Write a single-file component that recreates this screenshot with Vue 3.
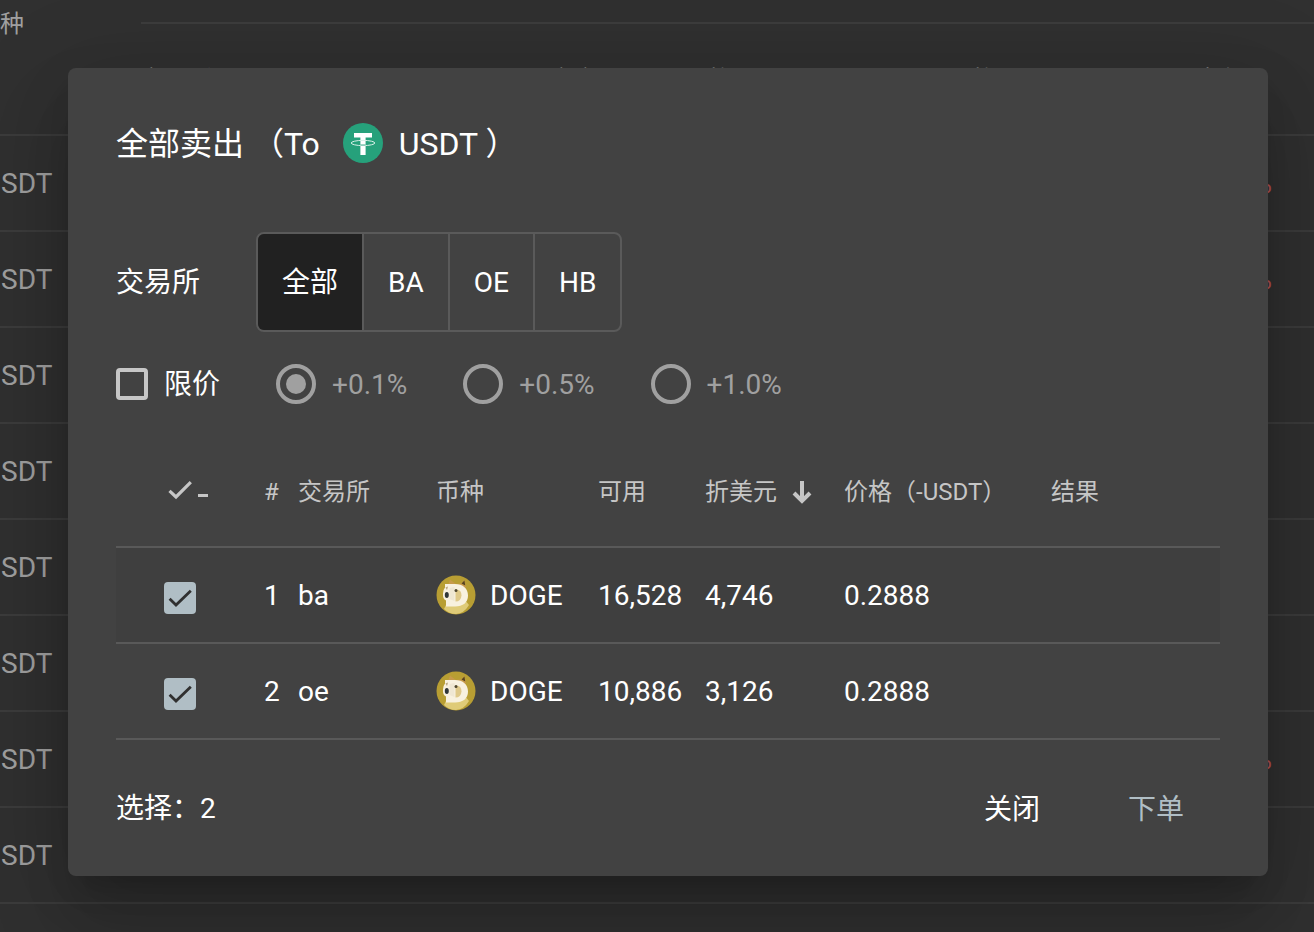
<script setup>
import { ref, computed } from 'vue'

const exchanges = ['全部', 'BA', 'OE', 'HB']
const exchange = ref('全部')
const limit = ref(false)
const offsets = ['+0.1%', '+0.5%', '+1.0%']
const offset = ref('+0.1%')
const orders = ref([
  { exchange: 'ba', coin: 'DOGE', available: '16,528', usd: '4,746', price: '0.2888', selected: true },
  { exchange: 'oe', coin: 'DOGE', available: '10,886', usd: '3,126', price: '0.2888', selected: true },
])
const selectedCount = computed(() => orders.value.filter((o) => o.selected).length)
const pageHeads = ['交易所', '价', '交交', '价格', '价格', '变化']
const pageRows = ['%', '%', '', '', '', '', '%', '']
</script>

<template>
  <div class="app">
    <main class="page">
      <div class="legend"><span>种</span><hr /></div>
      <div class="page-head">
        <span v-for="(h, i) in pageHeads" :key="i">{{ h }}</span>
      </div>
      <div v-for="(change, i) in pageRows" :key="i" class="page-row">
        <span>SDT</span><span class="loss">{{ change }}</span>
      </div>
    </main>

    <div class="overlay">
      <section class="dialog" role="dialog" aria-labelledby="dialog-title">
        <h2 id="dialog-title" class="title">
          <span class="text">全部卖出 （To</span>
          <svg class="coin tether" viewBox="0 0 40 40" aria-hidden="true">
            <circle cx="20" cy="20" r="20" fill="#26a17b" />
            <path d="M11 10H29V14.600H22.600V32H17.400V14.600H11Z" fill="#fff" />
            <ellipse cx="20" cy="20" rx="11.800" ry="2.600" fill="none" stroke="#d9f1e9" stroke-width="1" />
            <path d="M17.400 21.200H22.600V22.800H17.400Z" fill="#26a17b" opacity=".55" />
          </svg>
          <span class="text">USDT ）</span>
        </h2>

        <div class="exchange-row">
          <span id="exchange-label" class="text">交易所</span>
          <div class="toggle" role="group" aria-labelledby="exchange-label">
            <button
              v-for="e in exchanges"
              :key="e"
              type="button"
              :class="{ active: e === exchange }"
              :aria-pressed="e === exchange"
              @click="exchange = e"
            >{{ e }}</button>
          </div>
        </div>

        <div class="limit-row">
          <label class="option"><input v-model="limit" class="box" type="checkbox" /><span class="text">限价</span></label>
          <label v-for="o in offsets" :key="o" class="option" :class="{ disabled: !limit }">
            <input v-model="offset" class="radio" type="radio" name="offset" :value="o" :disabled="!limit" />
            <span class="text">{{ o }}</span>
          </label>
        </div>

        <table>
          <colgroup>
            <col class="c-select" /><col class="c-num" /><col class="c-exchange" /><col class="c-coin" />
            <col class="c-available" /><col class="c-usd" /><col class="c-price" /><col />
          </colgroup>
          <thead>
            <tr>
              <th class="select">
                <button type="button" class="select-all" aria-label="切换选择">
                  <svg width="48" height="32" viewBox="0 0 48 32" fill="none" stroke="currentColor" aria-hidden="true">
                    <path d="M5.500 14.800L12 21L26.800 6.200" stroke-width="3.200" />
                    <path d="M34 19.500H44" stroke-width="3" />
                  </svg>
                </button>
              </th>
              <th>#</th>
              <th>交易所</th>
              <th>币种</th>
              <th>可用</th>
              <th>
                <button type="button" class="sort">
                  折美元
                  <svg width="20" height="28" viewBox="0 0 20 28" fill="none" stroke="currentColor" stroke-width="4" aria-hidden="true">
                    <path d="M10 3V23M2 15L10 23L18 15" />
                  </svg>
                </button>
              </th>
              <th>价格（-USDT）</th>
              <th>结果</th>
            </tr>
          </thead>
          <tbody>
            <tr v-for="(o, i) in orders" :key="o.exchange" :class="{ hovered: i === 0 }">
              <td class="select">
                <label class="tick">
                  <input v-model="o.selected" type="checkbox" :aria-label="o.exchange + ' ' + o.coin" />
                  <svg v-if="o.selected" viewBox="0 0 32 32" fill="none" stroke="#303030" stroke-width="2.800" aria-hidden="true">
                    <path d="M5.600 16.800L12 23L26.800 8.800" />
                  </svg>
                </label>
              </td>
              <td>{{ i + 1 }}</td>
              <td>{{ o.exchange }}</td>
              <td class="coin-column">
                <span class="coin-cell">
                  <svg class="coin" viewBox="0 0 40 40" aria-hidden="true">
                    <circle cx="20" cy="20" r="19.500" fill="#b89e33" />
                    <path d="M12 10L14 4.500L20 9L25 8.500L28.500 5L30 12L27 15Z" fill="#c79a4b" />
                    <path d="M25.500 8.500L28.400 5.500L29.300 10.500Z" fill="#57431f" />
                    <path d="M10 30Q20 33 29 25L33 30Q28 38.500 20 39Q13 39 8 34Z" fill="#dfcb78" />
                    <path d="M9 9H19C27 9 32 13.500 32 20.500S27 31.500 19 31.500H10V25.500Q6.500 24 7 18.500Q7.500 14 9 12.500Z" fill="#f8f1df" />
                    <path d="M19.500 14.500Q25.500 14 25.500 20.500Q25 26.500 19.500 26.500Z" fill="#dfc98a" />
                    <path d="M13.500 13L18.500 12V26L13.500 24Z" fill="#efe7d3" />
                    <ellipse cx="10.800" cy="20" rx="2" ry="3" fill="#303638" />
                    <circle cx="20" cy="15.500" r="1.500" fill="#50472f" />
                    <path d="M9.500 12.500L12 11.500L11 15Z" fill="#b7a37d" />
                  </svg>
                  <span class="text">{{ o.coin }}</span>
                </span>
              </td>
              <td>{{ o.available }}</td>
              <td>{{ o.usd }}</td>
              <td>{{ o.price }}</td>
              <td></td>
            </tr>
          </tbody>
        </table>

        <footer>
          <span class="count text">选择：{{ selectedCount }}</span>
          <button type="button">关闭</button>
          <button type="button" class="primary">下单</button>
        </footer>
      </section>
    </div>
  </div>
</template>

<style>
body {
  background: #303030;
}
</style>

<style scoped>
.app {
  position: relative;
  min-height: 100vh;
  overflow: hidden;
  font: 28px/40px Roboto, 'Noto Sans CJK SC', sans-serif;
  color: #fff;
}
.app * {
  box-sizing: border-box;
}
.page {
  position: absolute;
  inset: 0;
  overflow: hidden;
  color: #a0a0a0;
}
.legend {
  display: flex;
  height: 24px;
  font-size: 24px;
  line-height: 48px;
}
.legend span {
  width: 141px;
}
.legend hr {
  flex: 1;
  margin: 22px 0 0;
  border: 0;
  border-top: 2px solid #3c3c3c;
}
.page-head {
  display: grid;
  grid-template-columns: 188px 222px 134px 264px 248px 1fr;
  align-items: center;
  height: 112px;
  padding: 2px 0 0 140px;
  border-bottom: 2px solid #3c3c3c;
  font-size: 24px;
}
.page-row {
  display: flex;
  justify-content: space-between;
  align-items: center;
  height: 96px;
  padding: 2px 42px 0 1px;
  border-bottom: 2px solid #3c3c3c;
}
.loss {
  color: #b05050;
}
.overlay {
  position: relative;
  display: flex;
  justify-content: center;
  padding: 68px 46px 56px 68px;
}
.dialog {
  width: 100%;
  max-width: 1200px;
  padding: 44px 48px 32px;
  border-radius: 8px;
  background: #424242;
  box-shadow:
    0 22px 30px -14px rgba(0, 0, 0, 0.2),
    0 48px 76px 6px rgba(0, 0, 0, 0.14),
    0 18px 92px 16px rgba(0, 0, 0, 0.12);
}
button {
  margin: 0;
  padding: 0;
  border: 0;
  background: none;
  color: inherit;
  font: inherit;
  cursor: pointer;
}
input {
  appearance: none;
  margin: 0;
}
.text {
  padding-top: 2px;
}
.title {
  display: flex;
  align-items: center;
  height: 62px;
  margin: 0 0 58px;
  font-size: 32px;
  font-weight: 400;
}
.coin {
  flex: none;
  width: 40px;
  height: 40px;
}
.tether {
  margin: 0 16px 0 23px;
}
.exchange-row {
  display: flex;
  align-items: center;
  gap: 56px;
}
.toggle {
  display: flex;
  border: 2px solid #5a5a5a;
  border-radius: 8px;
  overflow: hidden;
}
.toggle button {
  height: 96px;
  padding: 2px 24px 0;
}
.toggle button + button {
  border-left: 2px solid #5a5a5a;
}
.toggle .active {
  background: #212121;
}
.limit-row {
  display: flex;
  gap: 56px;
  margin: 32px 0;
}
.option {
  display: flex;
  align-items: center;
  gap: 16px;
  height: 40px;
}
.disabled {
  color: #a0a0a0;
}
.box {
  width: 32px;
  height: 32px;
  border: 4px solid #c6c6c6;
  border-radius: 4px;
}
.box:checked {
  background: #b0bec5;
}
.radio {
  width: 40px;
  height: 40px;
  border: 4px solid #a0a0a0;
  border-radius: 50%;
}
.radio:checked {
  padding: 6px;
  background: #a0a0a0 content-box;
}
table {
  width: 100%;
  table-layout: fixed;
  border-collapse: separate;
  border-spacing: 0;
}
.c-select { width: 140px; }
.c-num { width: 34px; }
.c-exchange { width: 138px; }
.c-coin { width: 162px; }
.c-available { width: 107px; }
.c-usd { width: 139px; }
.c-price { width: 207px; }
th,
td {
  padding: 2px 8px 0;
  border-bottom: 2px solid #595959;
  text-align: left;
  white-space: nowrap;
}
th {
  height: 112px;
  color: #c6c6c6;
  font-size: 24px;
  font-weight: 400;
}
td {
  height: 96px;
}
.coin-column {
  padding-top: 0;
}
.hovered {
  background: #3f3f3f;
}
.select {
  padding-left: 48px;
}
td.select {
  padding-top: 6px;
}
.select-all,
.select-all svg {
  display: block;
}
.tick {
  display: block;
  position: relative;
  width: 32px;
  height: 32px;
}
.tick input {
  display: block;
  width: 32px;
  height: 32px;
  border: 4px solid #c6c6c6;
  border-radius: 4px;
}
.tick input:checked {
  border: 0;
  background: #b0bec5;
}
.tick svg {
  position: absolute;
  inset: 0;
  pointer-events: none;
}
.sort {
  display: flex;
  align-items: center;
  gap: 15px;
}
.coin-cell {
  display: flex;
  align-items: center;
  gap: 14px;
  height: 40px;
}
footer {
  display: flex;
  align-items: center;
  gap: 24px;
  margin-top: 32px;
  padding-right: 4px;
}
.count {
  margin-right: auto;
}
footer button {
  height: 72px;
  padding: 4px 32px 0;
}
.primary {
  color: #b0bec5;
}
</style>
